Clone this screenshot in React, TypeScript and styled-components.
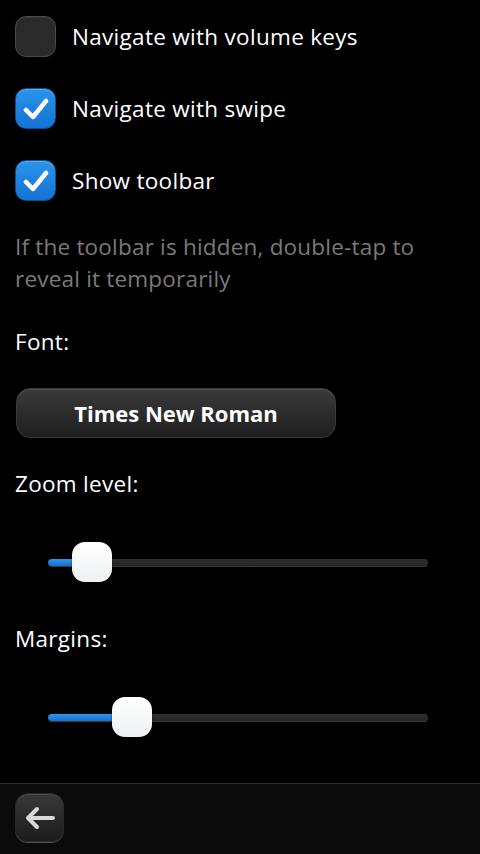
import React, {useState} from "react";
import styled, {createGlobalStyle} from "styled-components";

const GlobalStyle = createGlobalStyle`
    html, body{
        margin: 0;
        padding: 0;
        background: #000;
    }
    body{
        font-family: "Open Sans", "DejaVu Sans", sans-serif;
        color: #fff;
    }
`

const Page = styled.div`
    width: 480px;
    height: 854px;
    display: flex;
    flex-direction: column;
    background: #000;
    overflow: hidden;
`

const Content = styled.div`
    flex: 1;
    padding: 16px 15px 0 15px;
    display: flex;
    flex-direction: column;
`

const CheckRow = styled.label`
    display: flex;
    align-items: center;
    gap: 16px;
    height: 41px;
    margin-bottom: 31px;
    font-size: 22.5px;
    letter-spacing: 0.3px;
`

const Box = styled.span<{checked: boolean}>`
    width: 41px;
    height: 41px;
    box-sizing: border-box;
    border-radius: 11px;
    display: flex;
    align-items: center;
    justify-content: center;
    flex-shrink: 0;
    background: ${p => p.checked ? "linear-gradient(#2b93ec, #1273d4)" : "#2a2a2a"};
    border: 1px solid ${p => p.checked ? "#0d4f93" : "#4a4a4a"};
    box-shadow: inset 0 1px 0 ${p => p.checked ? "rgba(255,255,255,0.25)" : "rgba(255,255,255,0.06)"};
`

const Hint = styled.p`
    margin: -1px 0 0 0;
    font-size: 22.5px;
    line-height: 32px;
    color: #7a7a7a;
    letter-spacing: 0.2px;
`

const Label = styled.div<{gap: number}>`
    font-size: 22.5px;
    letter-spacing: 0.3px;
    margin-top: ${p => p.gap}px;
    line-height: 32px;
`

const FontButton = styled.button`
    margin-top: 30px;
    margin-left: 1px;
    width: 320px;
    height: 50px;
    flex-shrink: 0;
    border-radius: 14px;
    border: 1px solid #3a3a3a;
    background: linear-gradient(#3a3a3a, #1e1e1e);
    color: #fff;
    font-family: "Open Sans", "DejaVu Sans", sans-serif;
    font-weight: 700;
    font-size: 22px;
    box-shadow: inset 0 1px 0 rgba(255,255,255,0.12);
`

const SliderWrap = styled.div`
    position: relative;
    margin: 38px 0 0 33px;
    width: 380px;
    height: 48px;
    flex-shrink: 0;
    display: flex;
    align-items: center;
`

const Track = styled.div`
    width: 100%;
    height: 7px;
    border-radius: 4px;
    background: linear-gradient(#2e2e2e, #262626);
    box-shadow: 0 1px 0 #3a3a3a;
    overflow: hidden;
`

const Fill = styled.div`
    height: 100%;
    background: linear-gradient(#2d95ee, #1570d0);
    border-radius: 4px;
`

const Thumb = styled.div`
    position: absolute;
    top: 4px;
    width: 40px;
    height: 40px;
    margin-left: -20px;
    border-radius: 13px;
    background: linear-gradient(#ffffff, #eef0f1);
    box-shadow: 0 1px 2px rgba(0,0,0,0.6);
`

const Toolbar = styled.div`
    height: 70px;
    border-top: 1px solid #2c2c2c;
    background: #0b0b0b;
    display: flex;
    align-items: center;
    padding-left: 15px;
`

const BackButton = styled.button`
    width: 49px;
    height: 49px;
    margin-top: -3px;
    border-radius: 13px;
    border: 1px solid #2a2a2a;
    background: linear-gradient(#383838, #1c1c1c);
    box-shadow: inset 0 1px 0 rgba(255,255,255,0.1), 0 1px 0 #555;
    display: flex;
    align-items: center;
    justify-content: center;
    padding: 0;
`

const Check = () => (
    <svg width="26" height="22" viewBox="0 0 26 22">
        <path d="M3 12 L10 19 L23 3" fill="none" stroke="#fff" strokeWidth="4.5" strokeLinecap="round" strokeLinejoin="round"/>
    </svg>
)

const Slider = ({value}: {value: number}) => {
    return (<SliderWrap>
        <Track><Fill style={{width: `${value}px`}}/></Track>
        <Thumb style={{left: `${value}px`}}/>
    </SliderWrap>)
}

export default function App(){
    const [opts, setOpts] = useState({volume: false, swipe: true, toolbar: true});
    const toggle = (k: keyof typeof opts) => setOpts(o => ({...o, [k]: !o[k]}));

    return (<Page>
        <GlobalStyle/>
        <Content>
            <CheckRow onClick={() => toggle("volume")}>
                <Box checked={opts.volume}>{opts.volume ? <Check/> : null}</Box>
                Navigate with volume keys
            </CheckRow>
            <CheckRow onClick={() => toggle("swipe")}>
                <Box checked={opts.swipe}>{opts.swipe ? <Check/> : null}</Box>
                Navigate with swipe
            </CheckRow>
            <CheckRow onClick={() => toggle("toolbar")}>
                <Box checked={opts.toolbar}>{opts.toolbar ? <Check/> : null}</Box>
                Show toolbar
            </CheckRow>
            <Hint>If the toolbar is hidden, double-tap to reveal it temporarily</Hint>
            <Label gap={31}>Font:</Label>
            <FontButton>Times New Roman</FontButton>
            <Label gap={30}>Zoom level:</Label>
            <Slider value={44}/>
            <Label gap={37}>Margins:</Label>
            <Slider value={84}/>
        </Content>
        <Toolbar>
            <BackButton>
                <svg width="32" height="26" viewBox="0 0 32 26">
                    <path d="M29 13 H5 M13 4 L4 13 L13 22" fill="none" stroke="#d8d8d8" strokeWidth="4" strokeLinecap="round" strokeLinejoin="round"/>
                </svg>
            </BackButton>
        </Toolbar>
    </Page>)
}
